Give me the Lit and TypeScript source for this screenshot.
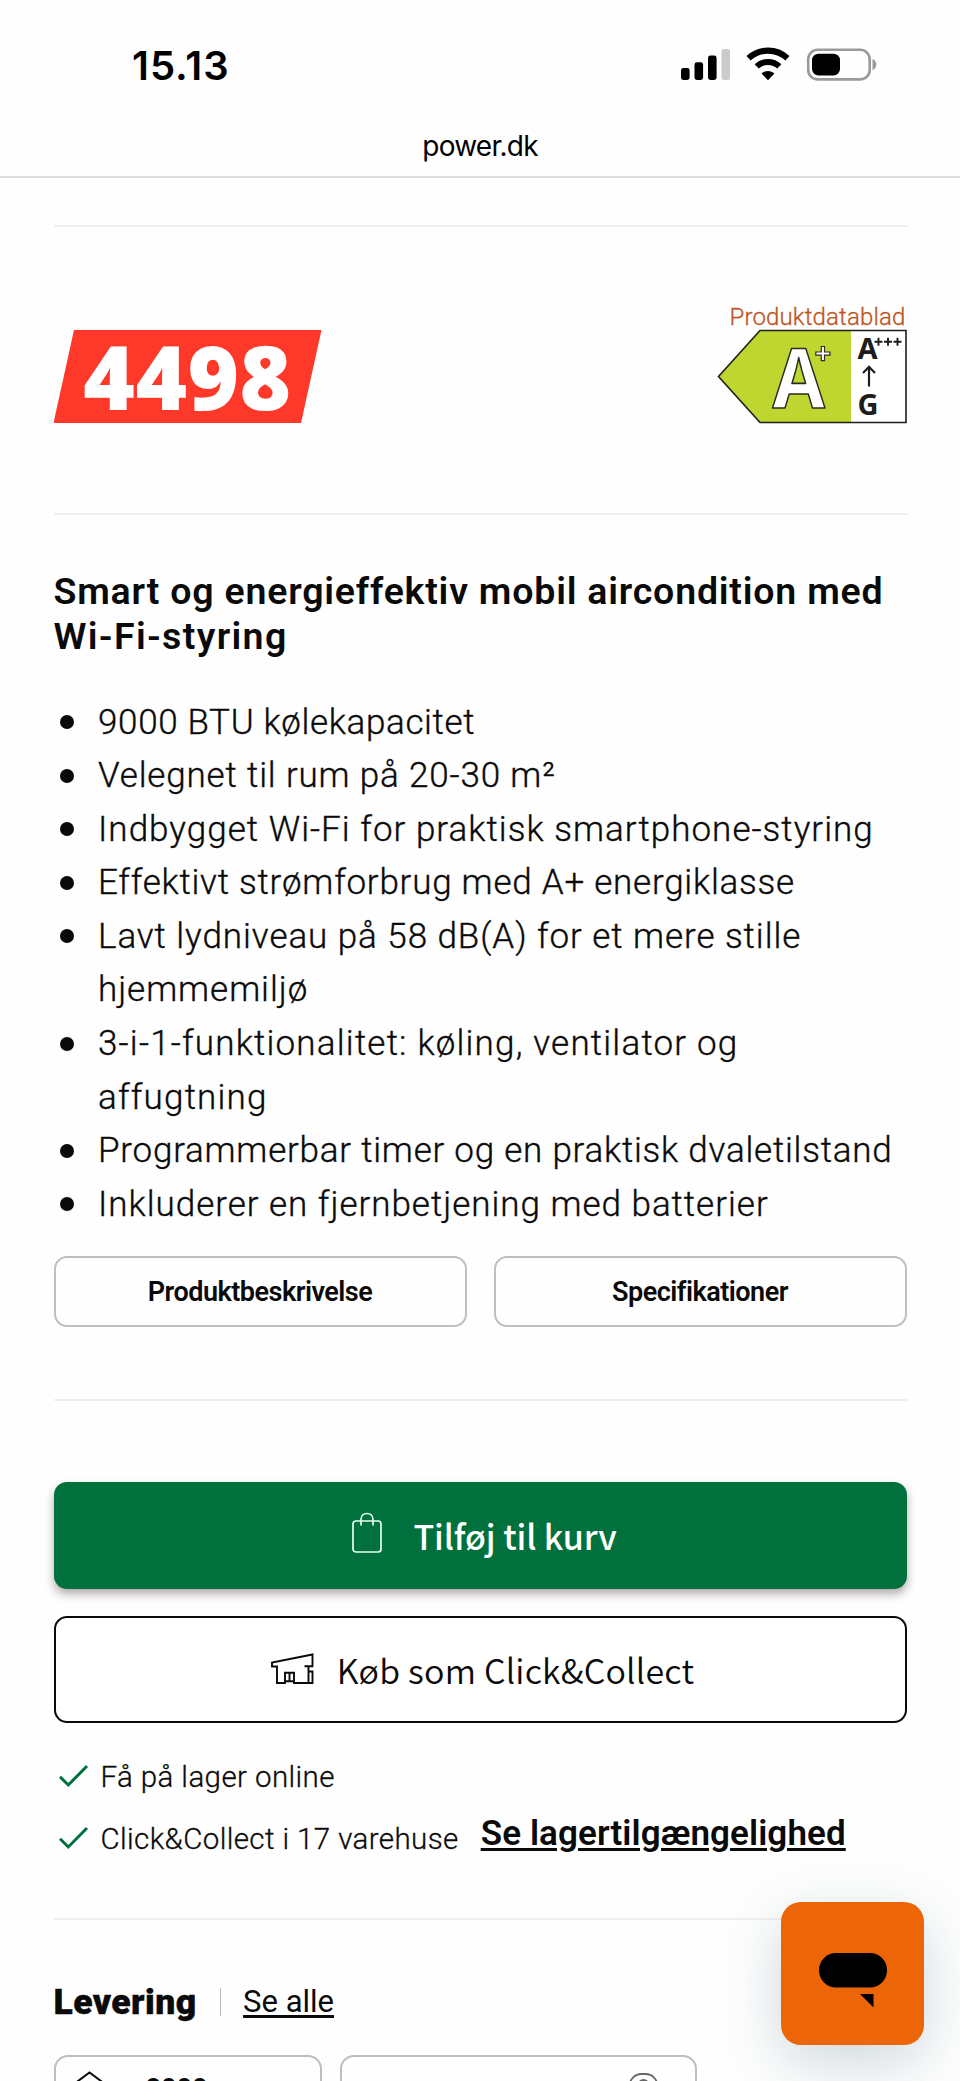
import { LitElement, html, css } from "lit";
import { customElement } from "lit/decorators.js";
import { styleMap } from "lit/directives/style-map.js";

interface Feature { text: string; tracking: number; }

const FEATURES: Feature[] = [
  { text: "9000 BTU kølekapacitet", tracking: 0.65 },
  { text: "Velegnet til rum på 20-30 m²", tracking: 0.84 },
  { text: "Indbygget Wi-Fi for praktisk smartphone-styring", tracking: 1.03 },
  { text: "Effektivt strømforbrug med A+ energiklasse", tracking: 0.76 },
  { text: "Lavt lydniveau på 58 dB(A) for et mere stille\nhjemmemiljø", tracking: 0.94 },
  { text: "3-i-1-funktionalitet: køling, ventilator og\naffugtning", tracking: 1.2 },
  { text: "Programmerbar timer og en praktisk dvaletilstand", tracking: 0.77 },
  { text: "Inkluderer en fjernbetjening med batterier", tracking: 0.98 },
];

@customElement("status-bar")
class StatusBar extends LitElement {
  static styles = css`
    :host { display: block; height: 176px; border-bottom: 2px solid #dedede; font-family: Inter, sans-serif; color: #000; }
    .top { display: flex; justify-content: space-between; height: 124px; box-sizing: border-box; padding: 42px 83px 0 132px; }
    .clock { font-size: 40px; font-weight: 600; line-height: 47px; letter-spacing: 1px; }
    .icons { display: flex; padding-top: 4px; gap: 16px; }
    .url { text-align: center; font-size: 28px; line-height: 40px; margin-top: 2px; letter-spacing: -0.75px; }
  `;
  render() {
    return html`
      <div class="top">
        <div class="clock">15.13</div>
        <div class="icons">
          <svg width="49" height="36" viewBox="0 0 49 36">
            <rect x="0" y="22" width="8.6" height="12" rx="2.4" />
            <rect x="13.5" y="16.3" width="8.6" height="17.7" rx="2.4" />
            <rect x="27" y="9.6" width="8.6" height="24.4" rx="2.4" />
            <rect x="40.5" y="3" width="8.6" height="31" rx="2.4" fill="#cbcbcb" />
          </svg>
          <svg width="44" height="36" viewBox="0 0 44 36">
            <path d="M22 34.3 L15.6 27.6 C19 24 25 24 28.4 27.6Z" />
            <path d="M10.7 20.4 C17 14.4 27 14.4 33.3 20.4" fill="none" stroke="#000" stroke-width="6" />
            <path d="M2.6 12.2 C13.5 2 30.5 2 41.4 12.2" fill="none" stroke="#000" stroke-width="6.2" />
          </svg>
          <svg width="71" height="36" viewBox="0 0 71 36">
            <rect x="2.2" y="3.8" width="61.5" height="29.6" rx="9.5" fill="none" stroke="#9a9a9a" stroke-width="2.6" />
            <rect x="6" y="7.7" width="28" height="21.8" rx="6.5" />
            <path d="M66.5 13 C71.5 14.5 71.5 22.7 66.5 24.2Z" fill="#9a9a9a" />
          </svg>
        </div>
      </div>
      <div class="url">power.dk</div>
    `;
  }
}

@customElement("energy-label")
class EnergyLabel extends LitElement {
  static styles = css`
    :host { display: flex; flex-direction: column; align-items: flex-end; }
    .sheet { font-family: Roboto, sans-serif; font-size: 24px; font-weight: 300; -webkit-text-stroke: 0.3px #bf5420; line-height: 24px; padding-top: 4px; color: #bf5420; padding-right: 1px; letter-spacing: 0.15px; }
    svg { display: block; }
    text { font-family: "Noto Sans", sans-serif; }
  `;
  render() {
    return html`
      <div class="sheet">Produktdatablad</div>
      <svg width="190" height="96" viewBox="0 0 190 96">
        <path d="M1.5 47.5 L43 1.5 H188.5 V93.5 H43Z" fill="#fff" />
        <path d="M1.5 47.5 L43 1.5 H134 V93.5 H43Z" fill="#bfd630" />
        <path d="M1.5 47.5 L43 1.5 H189 V93.5 H43Z" fill="none" stroke="#1d1d1b" stroke-width="1.6" />
        <text x="55.5" y="79" font-size="83" font-weight="700" fill="#fff" stroke="#2b2b22" stroke-width="1.6" stroke-linejoin="round" textLength="52.5" lengthAdjust="spacingAndGlyphs">A</text>
        <path d="M104.3 17.5 V23 H98.8 V26.2 H104.3 V31.7 H107.500 V26.2 H113 V23 H107.500 V17.500Z" fill="#fff" stroke="#2b2b22" stroke-width="1.2" />
        <text x="140.5" y="29.5" font-size="29" font-weight="700" fill="#1d1d1b">A</text>
        <path d="M157.5 12.8 H165.5 M161.5 8.8 V16.8 M167 12.8 H175 M171 8.8 V16.8 M176.5 12.8 H184.5 M180.5 8.8 V16.8" stroke="#1d1d1b" stroke-width="1.9" />
        <path d="M152 57.5 V38.5 M146 44 L152 37.8 L158 44" fill="none" stroke="#1d1d1b" stroke-width="2.2" />
        <text x="140.5" y="85.500" font-size="29" font-weight="700" fill="#1d1d1b">G</text>
      </svg>
    `;
  }
}

@customElement("app-root")
class AppRoot extends LitElement {
  static styles = css`
    :host { display: block; position: relative; width: 960px; height: 2081px; overflow: hidden; background: #fefefe; color: #0a0a0a; font-family: Roboto, sans-serif; }
    svg { display: block; flex: none; }
    main { padding: 47px 53.5px 0; }
    .rule { height: 2px; background: #efefef; }
    .price-row { display: flex; justify-content: space-between; height: 286px; box-sizing: border-box; padding-top: 74px; }
    .price { margin-top: 29px; width: 268px; height: 93px; background: #fe3929; clip-path: polygon(20.5px 0, 100% 0, 247.5px 100%, 0 100%); color: #fff; font-family: "Noto Sans", sans-serif; font-size: 88px; font-weight: 900; line-height: 93px; text-align: center; letter-spacing: 0.5px; }
    h1 { margin: 53.5px 0 0; font-size: 37.5px; line-height: 45px; font-weight: 600; letter-spacing: 0.8px; }
    .wide { letter-spacing: 1.35px; }
    ul { list-style: none; margin: 37px 0 0; padding: 0; font-size: 35px; line-height: 53.6px; font-weight: 300; -webkit-text-stroke: 0.35px #0a0a0a; }
    li { display: grid; grid-template-columns: 44.5px 1fr; }
    li span { white-space: pre-line; }
    .dot { width: 14px; height: 14px; border-radius: 50%; background: #0a0a0a; margin: 19.5px 0 0 6px; }
    .tabs { display: grid; grid-template-columns: 1fr 1fr; gap: 27px; margin: 25px 0 72px; }
    .tab { height: 71px; box-sizing: border-box; border: 2px solid #bebebe; border-radius: 13px; display: flex; align-items: center; justify-content: center; font-size: 27px; font-weight: 600; padding-top: 1px; letter-spacing: -0.5px; }
    .cta { height: 107.5px; box-sizing: border-box; border-radius: 13px; display: flex; align-items: center; justify-content: center; font-family: "Noto Sans CJK SC", "Noto Sans", sans-serif; font-size: 34px; }
    .buy { margin-top: 80.3px; background: #00713c; color: #fff; font-weight: 500; gap: 31px; padding-left: 9px; box-shadow: 0 5px 10px rgba(40, 20, 25, 0.36); }
    .buy span { letter-spacing: -0.1px; }
    .buy svg { margin-bottom: 4px; }
    .collect { margin-top: 26.5px; border: 2px solid #0a0a0a; background: #fff; font-weight: 350; gap: 23px; padding-left: 5px; }
    .collect span { letter-spacing: 0.2px; }
    .stock { display: flex; flex-direction: column; gap: 22px; margin: 33.5px 0 59.5px; font-size: 29.5px; line-height: 40px; font-weight: 300; letter-spacing: 0.4px; }
    .line { display: flex; align-items: flex-start; height: 40px; -webkit-text-stroke: 0.3px #0a0a0a; }
    .line svg { margin: 7px 12px 0 4px; }
    .avail { margin: -5px 0 0 22px; font-size: 35px; font-weight: 600; letter-spacing: 0.1px; -webkit-text-stroke: 0; }
    .link { text-decoration: underline; text-decoration-thickness: 2.5px; text-underline-offset: 3px; }
    .delivery { display: flex; align-items: flex-start; line-height: 40px; margin-top: 62px; }
    h2 { margin: 0; font-size: 35.5px; font-weight: 900; line-height: 40px; letter-spacing: 0.45px; -webkit-text-stroke: 0.4px #0a0a0a; }
    .bar { width: 1.5px; height: 28px; background: #bdbdbd; margin: 6px 22px 0 23px; }
    .all { font-size: 31px; font-weight: 450; }
    .cards { display: flex; gap: 18px; margin-top: 32.5px; }
    .card { height: 90px; box-sizing: border-box; border: 2px solid #bebebe; border-radius: 14px; display: flex; padding-top: 14px; }
    .zip { width: 268px; padding-left: 14px; gap: 36px; font-size: 27px; font-weight: 700; line-height: 27px; }
    .zip span { margin-top: 5px; }
    .store { width: 357px; justify-content: flex-end; padding-right: 35px; }
    .chat { position: absolute; left: 781px; top: 1902px; width: 143px; height: 143px; border-radius: 20px; background: #ec6608; box-shadow: 0 18px 60px rgba(70, 105, 125, 0.26); display: flex; align-items: center; justify-content: center; }
    .chat svg { margin: 14px 0 0 0; }
  `;

  private check() {
    return html`<svg width="31" height="24" viewBox="0 0 31 24">
      <path d="M2 12.8 L10.3 21 L29 2" fill="none" stroke="#00713c" stroke-width="3" />
    </svg>`;
  }

  render() {
    return html`
      <status-bar></status-bar>
      <main>
        <div class="rule"></div>
        <div class="price-row">
          <div class="price">4498</div>
          <energy-label></energy-label>
        </div>
        <div class="rule"></div>
        <h1>Smart og energieffektiv mobil aircondition med<br /><span class="wide">Wi-Fi-styring</span></h1>
        <ul>
          ${FEATURES.map(
            (f) => html`<li><i class="dot"></i><span style=${styleMap({ letterSpacing: `${f.tracking}px` })}>${f.text}</span></li>`
          )}
        </ul>
        <div class="tabs">
          <div class="tab">Produktbeskrivelse</div>
          <div class="tab">Specifikationer</div>
        </div>
        <div class="rule"></div>
        <div class="cta buy">
          <svg width="30" height="42" viewBox="0 0 30 42">
            <g fill="none" stroke="#e9fff2" stroke-width="1.7">
              <rect x="1" y="9" width="28" height="31" rx="3" />
              <path d="M9 13.5 V7.5 C9 -0.5 21 -0.5 21 7.5 V13.5" />
            </g>
          </svg>
          <span>Tilføj til kurv</span>
        </div>
        <div class="cta collect">
          <svg width="43" height="32" viewBox="0 0 43 32">
            <g fill="none" stroke="#0a0a0a" stroke-width="1.9">
              <path d="M6 13.5 H1 V9.5 L41.5 1.5 V13.3 H33.5 M6 12.5 V30 H14 V19.7 H23 V30 H41.5 V18.5 H38" />
              <path d="M37.5 13 V30 M18.5 19.7 V28 M14 28.2 H23" />
            </g>
          </svg>
          <span>Køb som Click&amp;Collect</span>
        </div>
        <div class="stock">
          <div class="line">${this.check()}<span>Få på lager online</span></div>
          <div class="line">
            ${this.check()}<span>Click&amp;Collect i 17 varehuse</span>
            <span class="avail link">Se lagertilgængelighed</span>
          </div>
        </div>
        <div class="rule"></div>
        <div class="delivery">
          <h2>Levering</h2>
          <div class="bar"></div>
          <span class="all link">Se alle</span>
        </div>
        <div class="cards">
          <div class="card zip">
            <svg width="40" height="40" viewBox="0 0 40 40">
              <path d="M2 14.5 L19.5 1.5 L37 14.5 V38 H2Z" fill="none" stroke="#0a0a0a" stroke-width="2" />
            </svg>
            <span>8000</span>
          </div>
          <div class="card store">
            <svg width="32" height="40" viewBox="0 0 32 40">
              <rect x="1.5" y="3" width="28" height="32" rx="12" fill="none" stroke="#666" stroke-width="1.8" />
              <circle cx="15.5" cy="14" r="5" fill="none" stroke="#666" stroke-width="1.8" />
            </svg>
          </div>
        </div>
      </main>
      <div class="chat">
        <svg width="68" height="55" viewBox="0 0 68 55">
          <rect width="68" height="34.5" rx="17" />
          <path d="M41 41 H54.5 V54.5Z" />
        </svg>
      </div>
    `;
  }
}
